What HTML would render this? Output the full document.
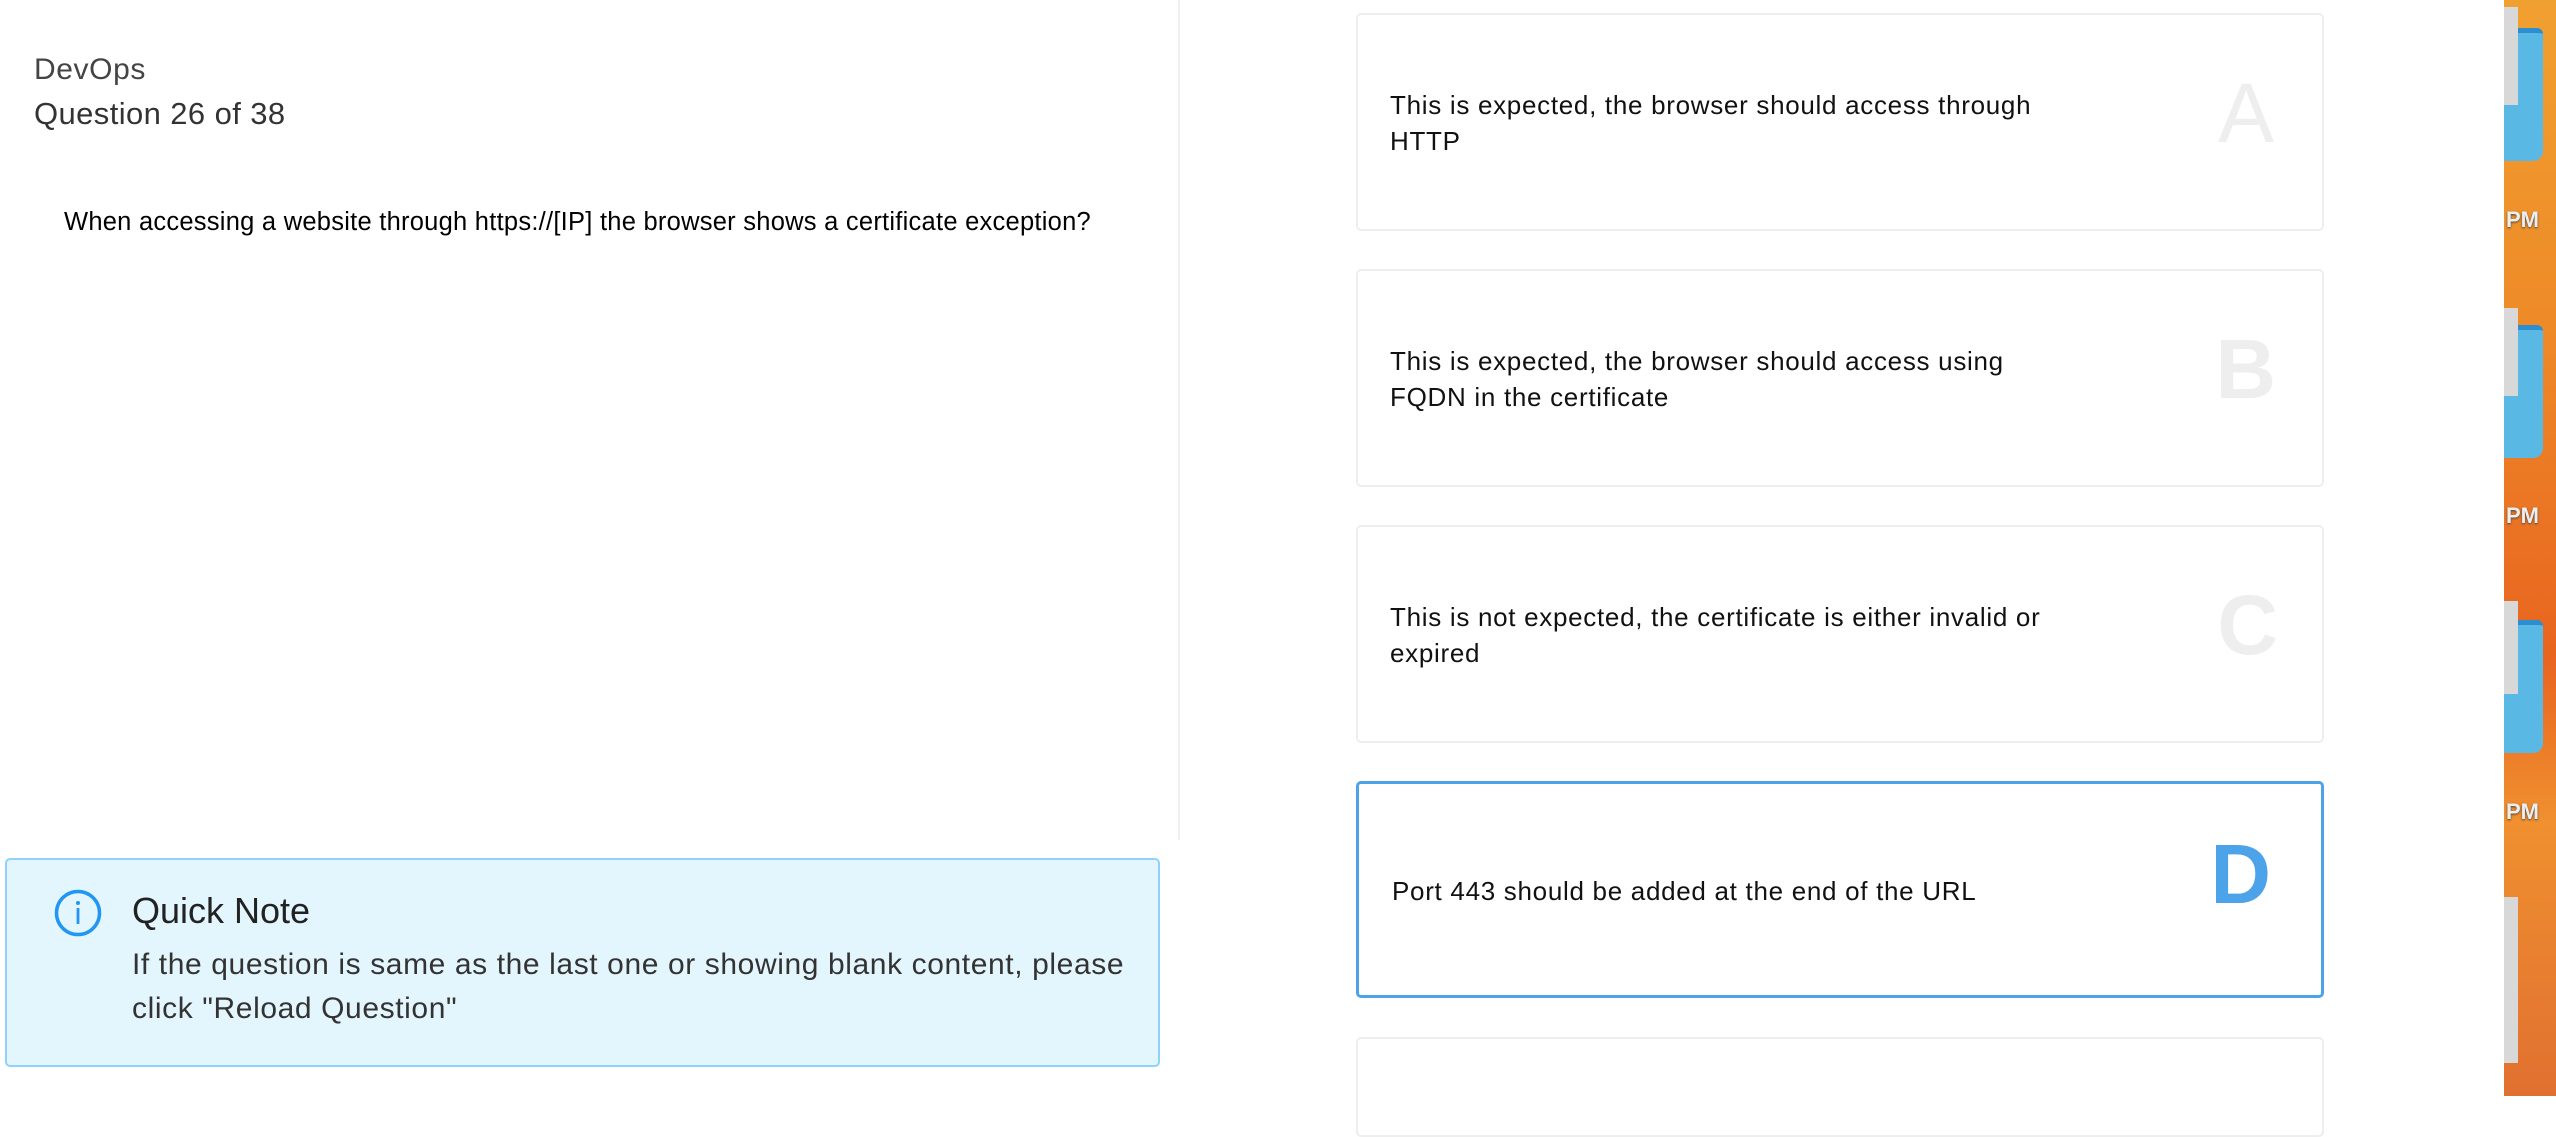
<!DOCTYPE html>
<html><head><meta charset="utf-8"><style>
*{margin:0;padding:0;box-sizing:border-box}
body{width:2556px;height:1096px;overflow:hidden;background:#fff;position:relative;font-family:"Liberation Sans",Arial,sans-serif}
.abs{position:absolute}
.desk{left:2504px;top:0;width:52px;height:1096px;background:linear-gradient(180deg,#f0a030 0%,#ee8a28 30%,#e86420 60%,#f09030 75%,#e07030 100%)}
.fold{position:absolute;left:0;width:39px;height:133px;background:#5ab8e4;border-radius:0 6px 10px 0;border-top:5px solid #2a8ed0}
.paper{position:absolute;left:0;width:14px;height:98px;background:#d8d8d8}
.pm{position:absolute;left:2px;font:bold 22px "Liberation Sans",sans-serif;color:#eee;text-shadow:0 1px 2px #444}
.card{position:absolute;left:1356px;width:968px;border:2px solid #eeeeee;border-radius:5px;background:#fff}
.card .t{position:absolute;left:32px;font-size:26px;letter-spacing:0.7px;line-height:36px;color:#111;width:670px}
.card .l{position:absolute;right:48px;font-size:84px;color:#eeeeee;line-height:84px}
</style></head><body>
<div class="abs" style="left:34px;top:53px;font-size:30px;color:#444;letter-spacing:0.6px">DevOps</div>
<div class="abs" style="left:34px;top:96px;font-size:31px;color:#333;letter-spacing:0.4px">Question 26 of 38</div>
<div class="abs" style="left:64px;top:208px;font-size:25.5px;color:#000;letter-spacing:0.25px">When accessing a website through https://[IP] the browser shows a certificate exception?</div>
<div class="abs" style="left:1178px;top:0;width:2px;height:840px;background:#f0f0f0"></div>

<div class="abs" style="left:5px;top:858px;width:1155px;height:209px;background:#e3f5fd;border:2px solid #8fd3fb;border-radius:5px"></div>
<svg class="abs" style="left:53px;top:888px" width="50" height="50" viewBox="0 0 50 50"><circle cx="25" cy="25" r="21.5" fill="none" stroke="#2196f3" stroke-width="3.5"/><circle cx="25" cy="15" r="2" fill="#2196f3"/><rect x="23.6" y="20" width="2.8" height="16" fill="#2196f3"/></svg>
<div class="abs" style="left:132px;top:890px;font-size:36px;color:#222">Quick Note</div>
<div class="abs" style="left:132px;top:943px;font-size:30px;letter-spacing:0.6px;line-height:44px;color:#333;width:1010px">If the question is same as the last one or showing blank content, please click "Reload Question"</div>

<div class="card" style="top:13px;height:218px"><div class="t" style="top:72px">This is expected, the browser should access through HTTP</div><div class="l" style="top:56px">A</div></div>
<div class="card" style="top:269px;height:218px"><div class="t" style="top:72px">This is expected, the browser should access using FQDN in the certificate</div><div class="l" style="top:56px;font-weight:bold;right:46px">B</div></div>
<div class="card" style="top:525px;height:218px"><div class="t" style="top:72px">This is not expected, the certificate is either invalid or expired</div><div class="l" style="top:56px;font-weight:bold;right:44px">C</div></div>
<div class="card" style="top:781px;height:217px;border:3px solid #4da3ea"><div class="t" style="top:89px;left:33px">Port 443 should be added at the end of the URL</div><div class="l" style="top:48px;font-weight:bold;color:#4da3ea;right:50px">D</div></div>
<div class="card" style="top:1037px;height:100px"></div>

<div class="abs desk">
<div class="fold" style="top:28px"></div><div class="paper" style="top:7px"></div>
<div class="pm" style="top:207px">PM</div>
<div class="fold" style="top:325px"></div><div class="paper" style="top:308px;height:88px"></div>
<div class="pm" style="top:503px">PM</div>
<div class="fold" style="top:620px"></div><div class="paper" style="top:601px;height:93px"></div>
<div class="pm" style="top:799px">PM</div>
<div class="paper" style="top:897px;height:166px"></div>
</div>
</body></html>
